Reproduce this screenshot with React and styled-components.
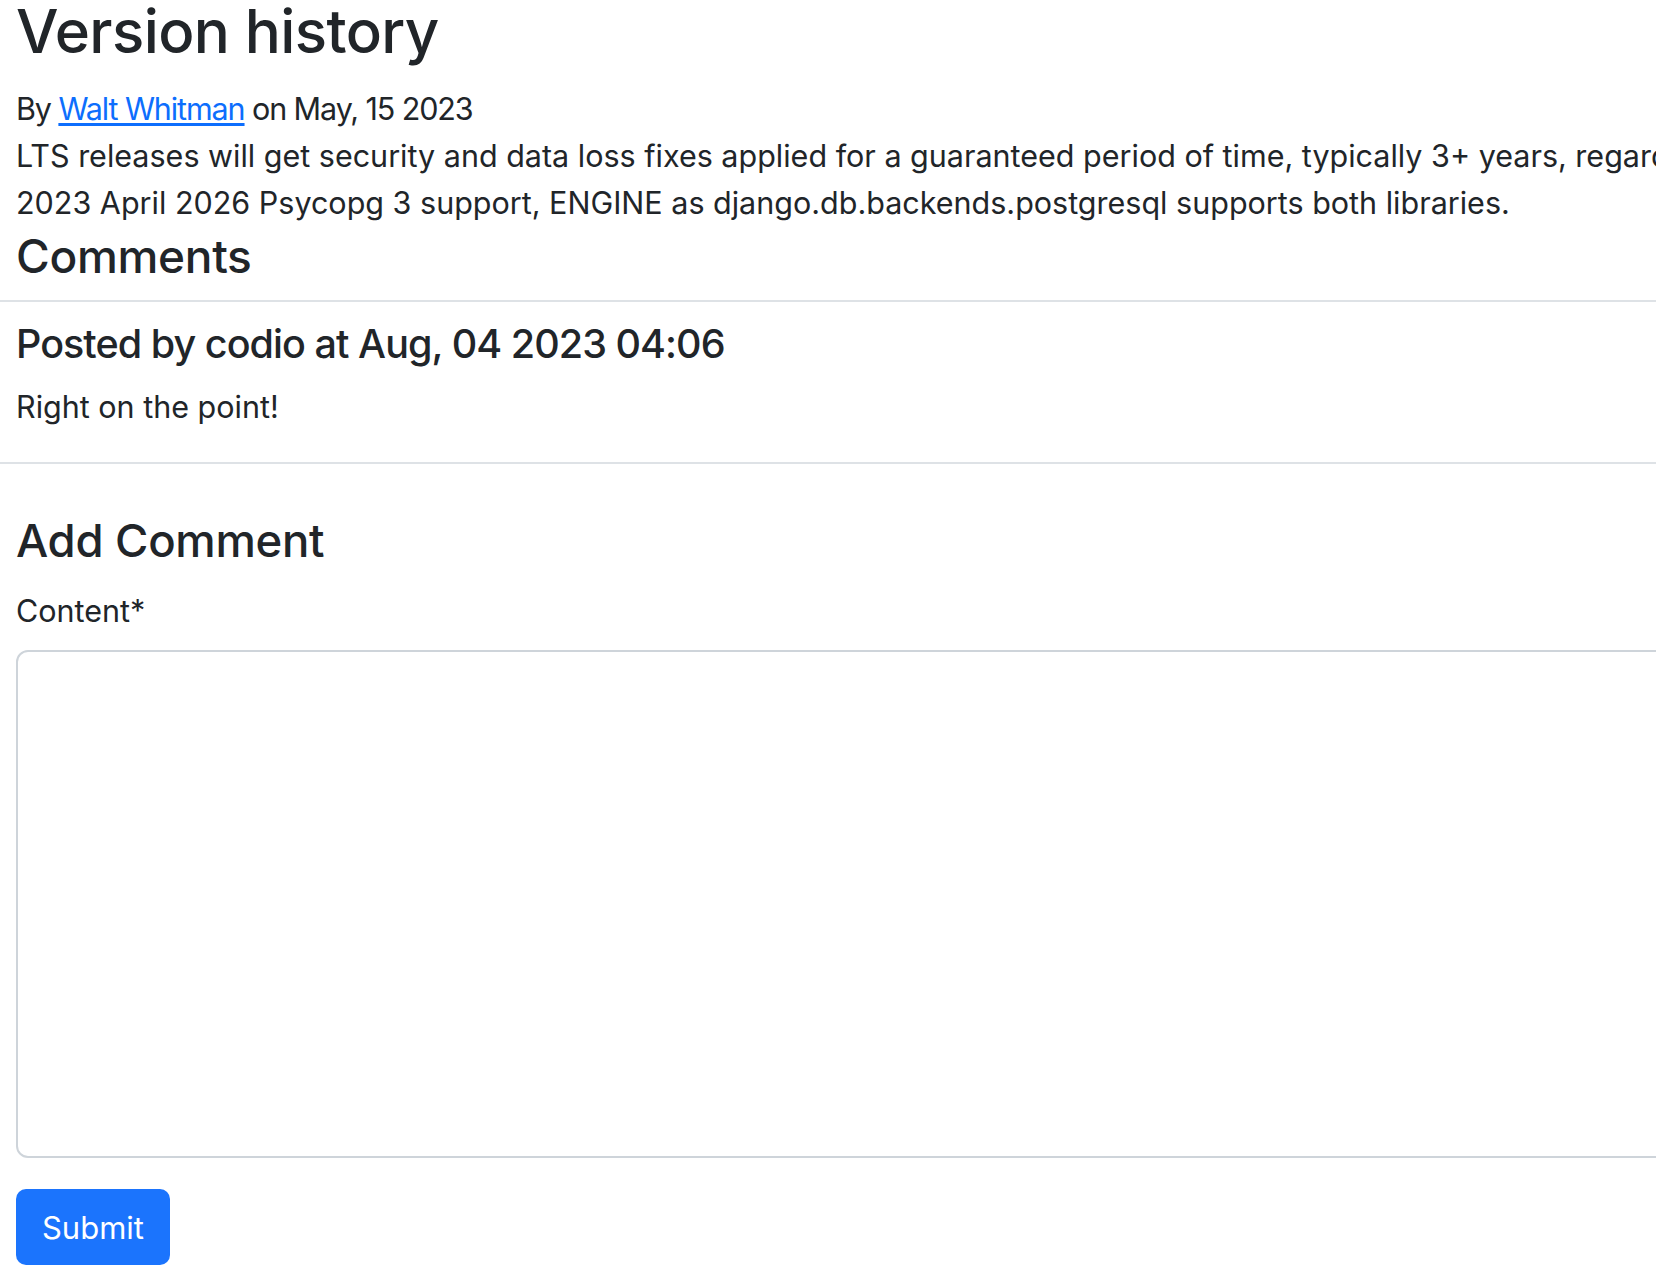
import React from 'react'
import styled, { createGlobalStyle } from 'styled-components';

const GlobalStyle = createGlobalStyle`
  html, body {
    margin: 0;
    padding: 0;
    background: #fff;
    overflow: hidden;
  }
  body {
    font-family: Inter, "Noto Sans", sans-serif;
    color: #212529;
  }
`;

const Page = styled.div`
  width: 1900px;
  display: flex;
  flex-direction: column;
`;

const Section = styled.section`
  padding: 0 16px;
  display: flex;
  flex-direction: column;
`;

const Title = styled.h1`
  margin: -5px 0 0;
  font-size: 60px;
  line-height: 72px;
  font-weight: 500;
  letter-spacing: -0.6px;
`;

const Text = styled.p`
  margin: ${p => p.$top || 0}px 0 0;
  font-size: 30.5px;
  line-height: 46px;
  white-space: nowrap;
  letter-spacing: ${p => p.$tight ? '-1.1px' : 'normal'};
`;

const Link = styled.a`
  color: #0d6efd;
  text-decoration: underline;
  text-underline-offset: 3px;
`;

const Heading = styled.h2`
  margin: ${p => p.$top || 0}px 0 0;
  font-size: ${p => p.$size}px;
  line-height: ${p => Math.round(p.$size * 1.2)}px;
  font-weight: 500;
  letter-spacing: ${p => p.$spacing || -0.3}px;
`;

const Rule = styled.hr`
  margin: ${p => p.$top || 0}px 0 0;
  border: 0;
  border-top: 2px solid #dee2e6;
`;

const Comment = styled.article`
  padding: 19px 16px 0;
  display: flex;
  flex-direction: column;
`;

const Form = styled.form`
  padding: 49px 16px 0;
  display: flex;
  flex-direction: column;
`;

const Label = styled.label`
  margin-top: 20px;
  font-size: 30.5px;
  line-height: 46px;
`;

const TextArea = styled.textarea`
  margin-top: 16px;
  width: 100%;
  height: 508px;
  box-sizing: border-box;
  border: 2px solid #ced4da;
  border-radius: 12px;
  resize: none;
  font: inherit;
  outline: none;
`;

const Button = styled.button`
  margin-top: 31px;
  align-self: flex-start;
  width: 154px;
  height: 76px;
  border: 0;
  border-radius: 10px;
  background: #1b74fd;
  color: #fff;
  font-family: Inter, "Noto Sans", sans-serif;
  font-size: 31px;
  font-weight: 400;
  cursor: pointer;
`;

export default function App() {
  return (
    <Page>
      <GlobalStyle />
      <Section>
        <Title>Version history</Title>
        <Text $top={19} $tight>
          By <Link href="#">Walt Whitman</Link> on May, 15 2023
        </Text>
        <Text $top={1}>
          LTS releases will get security and data loss fixes applied for a guaranteed period of time, typically 3+ years, regardless of the exact release cadence. April
        </Text>
        <Text $top={1}>
          2023 April 2026 Psycopg 3 support, ENGINE as django.db.backends.postgresql supports both libraries.
        </Text>
        <Heading $size={46} $top={3}>Comments</Heading>
      </Section>
      <Rule $top={16} />
      <Comment>
        <Heading as="h5" $size={39.5} $spacing={-0.95}>Posted by codio at Aug, 04 2023 04:06</Heading>
        <Text $top={16}>Right on the point!</Text>
      </Comment>
      <Rule $top={32} />
      <Form onSubmit={e => e.preventDefault()}>
        <Heading as="h3" $size={45.5}>Add Comment</Heading>
        <Label htmlFor="content">Content*</Label>
        <TextArea id="content" />
        <Button type="submit">Submit</Button>
      </Form>
    </Page>
  )
}
